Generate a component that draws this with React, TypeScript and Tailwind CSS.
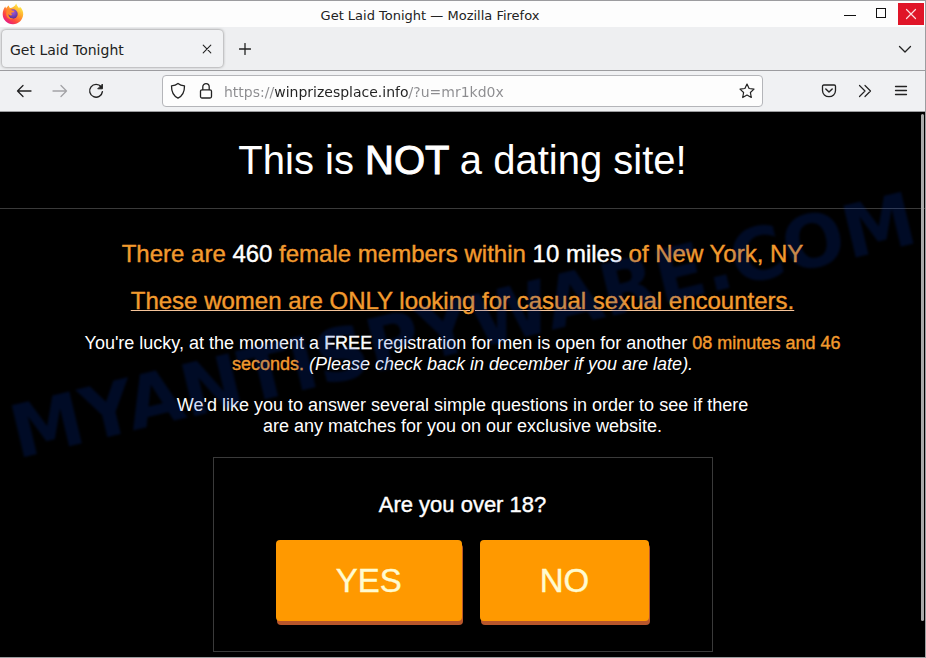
import { useState } from 'react';

const iconProps = {
  fill: 'none',
  stroke: 'currentColor',
  strokeLinecap: 'round' as const,
  strokeLinejoin: 'round' as const,
};

function FirefoxLogo() {
  return (
    <svg width="22" height="22" viewBox="0 0 22 22" aria-hidden="true">
      <defs>
        <linearGradient id="flame" x1="0.85" y1="0.1" x2="0.2" y2="0.95">
          <stop offset="0" stopColor="#fff04a" />
          <stop offset="0.35" stopColor="#ffa62c" />
          <stop offset="0.7" stopColor="#ff4a3c" />
          <stop offset="1" stopColor="#e31587" />
        </linearGradient>
        <radialGradient id="globe" cx="0.5" cy="0.3" r="0.8">
          <stop offset="0" stopColor="#a45bd8" />
          <stop offset="1" stopColor="#4a2a90" />
        </radialGradient>
      </defs>
      <path
        d="M14.2 0.6C14.6 2.6 16 3.6 17 5.2C17.7 4.9 17.8 4.3 17.7 3.6C20.2 5.8 21.4 8.6 21.2 11.6C20.8 17.2 16.5 21.2 11 21.2C5.2 21.2 0.7 16.8 0.7 11.2C0.7 8.2 1.7 5.6 3.4 3.6C3.5 4.5 3.8 5.1 4.2 5.5C4.8 4.3 5.8 3.2 7 2.6C6.9 3.7 7.3 4.6 8.1 5.1C10.3 4.9 13 3.6 14.2 0.6Z"
        fill="url(#flame)"
      />
      <circle cx="11" cy="11" r="4.7" fill="url(#globe)" />
      <path
        d="M4.8 6.6C6.4 5.6 8.8 6 10 7.4L12.4 7.9C12.1 9.1 10.9 9.3 9.7 9.6C8.9 10.4 9.3 11.4 10.4 11.8C9 12.9 7.2 12.4 6.3 11C6.2 14 8.6 15.8 11.6 15.6C8.4 17.6 4.2 15 4.2 10.8Z"
        fill="#ff8a2b"
      />
    </svg>
  );
}

function TitleBar() {
  return (
    <header className="flex h-[26px] items-center bg-[#fdfdfd] pl-0.5">
      <div className="flex w-6 items-center">
        <FirefoxLogo />
      </div>
      <h1 className="flex-1 pt-1 text-center text-[13px] leading-5 text-[#222]">
        Get Laid Tonight — Mozilla Firefox
      </h1>
      <div className="flex items-center">
        <button aria-label="Minimize" className="flex h-[22px] w-8 items-center justify-center">
          <svg width="12" height="12" {...iconProps}>
            <path d="M0 7.5H12" stroke="#111" />
          </svg>
        </button>
        <button aria-label="Maximize" className="mr-0.5 flex h-[22px] w-[30px] items-center justify-center">
          <svg width="12" height="12" {...iconProps}>
            <rect x="1.5" y="0.5" width="9" height="9" stroke="#111" strokeLinejoin="miter" />
          </svg>
        </button>
        <button aria-label="Close" className="mr-px flex h-[22px] w-[26px] items-center justify-center bg-[#e01528] text-[#fbdfe1]">
          <svg width="12" height="12" {...iconProps}>
            <path d="M1.5 1.5L10.5 10.5M10.5 1.5L1.5 10.5" strokeWidth="1.2" />
          </svg>
        </button>
      </div>
    </header>
  );
}

function TabStrip() {
  return (
    <div className="flex h-[43px] items-center bg-[#eeeff1] px-0.5 text-[#222]">
      <div className="flex h-[37px] w-[221px] items-center justify-between rounded bg-[#f1f2f4] pl-2 pr-2.5 shadow-[0_0_3px_#777]">
        <span className="pt-0.5 text-sm">Get Laid Tonight</span>
        <button aria-label="Close tab" className="flex size-3 items-center justify-center">
          <svg width="10" height="10" {...iconProps}>
            <path d="M1.2 1.2L8.8 8.8M8.8 1.2L1.2 8.8" strokeWidth="1.1" />
          </svg>
        </button>
      </div>
      <button aria-label="New tab" className="ml-3.5 flex size-4 items-center justify-center">
        <svg width="12" height="12" {...iconProps}>
          <path d="M6 0.5V11.5M0.5 6H11.5" strokeWidth="1.3" />
        </svg>
      </button>
      <button aria-label="List all tabs" className="ml-auto mr-2.5 flex size-4 items-center justify-center">
        <svg width="14" height="14" {...iconProps}>
          <path d="M1.5 4.5L7 10L12.5 4.5" strokeWidth="1.3" />
        </svg>
      </button>
    </div>
  );
}

function NavBar() {
  const [url, setUrl] = useState('https://winprizesplace.info/?u=mr1kd0x');

  return (
    <nav className="flex h-[42px] items-center border-y border-[#9c9c9f] bg-[#f0f1f3] text-[#222]">
      <div className="flex w-[162px] items-center gap-5 pl-4">
        <button aria-label="Back">
          <svg width="16" height="16" {...iconProps}>
            <path d="M15 8H1.5M7 2.5L1.5 8L7 13.5" strokeWidth="1.3" />
          </svg>
        </button>
        <button aria-label="Forward" className="text-[#a3a3a6]">
          <svg width="16" height="16" {...iconProps}>
            <path d="M1 8H14.5M9 2.5L14.5 8L9 13.5" strokeWidth="1.3" />
          </svg>
        </button>
        <button aria-label="Reload">
          <svg width="16" height="16" {...iconProps}>
            <path d="M13.2 4A6.4 6.4 0 1 0 14.4 8.6" strokeWidth="1.4" />
            <path d="M14.4 1.5V5.8H10.1Z" fill="currentColor" strokeWidth="1" />
          </svg>
        </button>
      </div>
      <div className="flex h-8 min-w-0 flex-1 items-center rounded border border-[#b4b5b9] bg-[#fdfdfd] px-[7px]">
        <svg width="16" height="18" className="shrink-0" {...iconProps}>
          <path d="M8 1.5C9.8 3 11.8 3.6 14.5 3.8C14.6 9.6 12.9 13.8 8 16.2C3.1 13.8 1.4 9.6 1.5 3.8C4.2 3.6 6.2 3 8 1.5Z" strokeWidth="1.3" />
        </svg>
        <svg width="14" height="18" className="ml-[13px] shrink-0" {...iconProps}>
          <rect x="1.5" y="7.8" width="11" height="8.2" rx="1.5" strokeWidth="1.3" />
          <path d="M3.8 7.5V4.8C3.8 0.6 10.2 0.6 10.2 4.8V7.5" strokeWidth="1.3" />
        </svg>
        {/* The host is drawn darker than the rest of the address */}
        <input
          aria-label="Address"
          value={url}
          onChange={(e) => setUrl(e.target.value)}
          className="ml-[11px] min-w-0 flex-1 bg-[linear-gradient(90deg,#8c8c8f_50px,#222_50px,#222_185px,#8c8c8f_185px)] bg-clip-text pt-px text-sm text-transparent outline-none"
        />
        <button aria-label="Bookmark this page">
          <svg width="16" height="16" {...iconProps}>
            <path d="M8 1L10.1 5.5L15 6.1L11.4 9.5L12.3 14.5L8 12.1L3.7 14.5L4.6 9.5L1 6.1L5.9 5.5Z" strokeWidth="1.2" />
          </svg>
        </button>
      </div>
      <div className="flex w-[162px] items-center justify-end gap-5 pr-4">
        <button aria-label="Save to Pocket">
          <svg width="16" height="16" {...iconProps}>
            <path d="M2.8 2H13.2C14 2 14.5 2.5 14.5 3.3V7.5C14.5 11 11.6 13.7 8 13.7C4.4 13.7 1.5 11 1.5 7.5V3.3C1.5 2.5 2 2 2.8 2Z" strokeWidth="1.3" />
            <path d="M4.8 6L8 9.1L11.2 6" strokeWidth="1.4" />
          </svg>
        </button>
        <button aria-label="More tools">
          <svg width="16" height="16" {...iconProps}>
            <path d="M2.5 2.5L8 8L2.5 13.5M8 2.5L13.5 8L8 13.5" strokeWidth="1.2" />
          </svg>
        </button>
        <button aria-label="Open menu">
          <svg width="16" height="16" {...iconProps}>
            <path d="M2.5 3.5H13.5M2.5 7.5H13.5M2.5 11.5H13.5" strokeWidth="1.3" />
          </svg>
        </button>
      </div>
    </nav>
  );
}

function AnswerButton({ label }: { label: string }) {
  return (
    <button className="rounded bg-[#ff9900] px-[60px] py-5 text-[33px] leading-[41px] text-[#fffbd0] shadow-[1px_4px_0_#b8562b] [-webkit-text-stroke:0.4px]">
      {label}
    </button>
  );
}

function LandingPage() {
  return (
    <main className="relative flex-1 overflow-hidden bg-black text-center font-['Liberation_Sans',Arial,sans-serif] text-white">
      <h2 className="border-b border-[#3a3a3a] py-6 text-[40px] leading-[48px]">
        This is <span className="[-webkit-text-stroke:1px]">NOT</span> a dating site!
      </h2>

      <div className="px-[72px] pt-[31px] text-lg leading-[21px]">
        <p className="mb-5 text-2xl leading-[27px] text-[#f29a2e] [-webkit-text-stroke:0.4px]">
          There are <span className="text-white">460</span> female members within{' '}
          <span className="text-white">10 miles</span> of New York, NY
        </p>
        <p className="mb-[19px] text-2xl leading-[27px] text-[#f29a2e] underline decoration-[#f5c49a] decoration-1 [-webkit-text-stroke:0.4px]">
          These women are ONLY looking for casual sexual encounters.
        </p>
        <p className="mb-5">
          You're lucky, at the moment a <span className="[-webkit-text-stroke:0.4px]">FREE</span> registration for men is open for another{' '}
          <span className="text-[#f29a2e] [-webkit-text-stroke:0.4px]">08 minutes and 46 seconds.</span>{' '}
          <em>(Please check back in december if you are late).</em>
        </p>
        <p className="mx-auto mb-5 max-w-[600px]">
          We'd like you to answer several simple questions in order to see if there are any matches for you on our exclusive website.
        </p>
      </div>

      <section className="mx-auto mb-1 max-w-[500px] border border-[#3a3a3a] pb-[30px] pt-[34px]">
        <h3 className="text-[22px] leading-[26px] [-webkit-text-stroke:0.4px]">Are you over 18?</h3>
        <div className="mt-[22px] flex justify-center gap-[18px]">
          <AnswerButton label="YES" />
          <AnswerButton label="NO" />
        </div>
      </section>

      <div className="pointer-events-none absolute inset-0 flex justify-center">
        <span className="mt-[172px] h-[84px] -rotate-[13.5deg] whitespace-nowrap font-['DejaVu_Sans',sans-serif] text-[73px] leading-[84px] font-bold text-[#003cd2]/18 blur-[1px]">
          MYANTISPYWARE.COM
        </span>
      </div>

      {/* Scrollbar thumb */}
      <div className="absolute right-px top-0.5 h-[93%] w-[3px] rounded bg-[#aaa]" />
    </main>
  );
}

export default function App() {
  return (
    <div className="flex min-h-screen flex-col border-y border-r border-[#9c9c9f] font-['DejaVu_Sans',sans-serif]">
      <TitleBar />
      <TabStrip />
      <NavBar />
      <LandingPage />
    </div>
  );
}
